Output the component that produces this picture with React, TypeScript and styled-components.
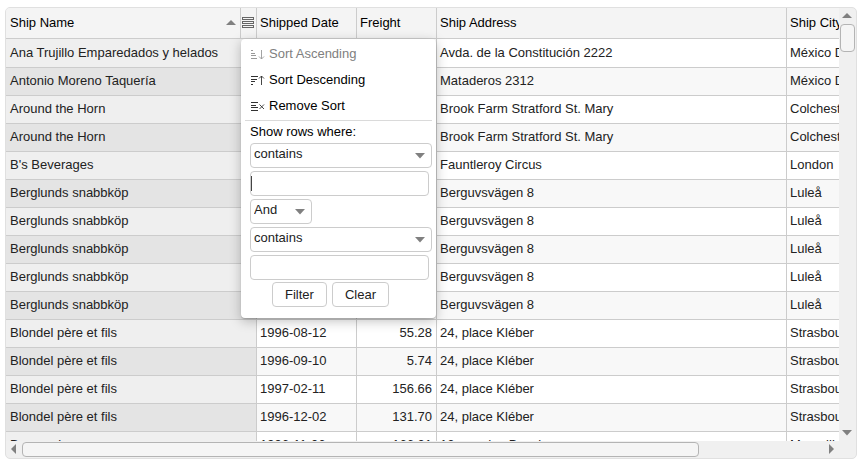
import React from "react";
import styled, { createGlobalStyle, css } from "styled-components";

const GlobalStyle = createGlobalStyle`
  *, *::before, *::after { box-sizing: border-box; }
  body {
    margin: 0;
    background: #fff;
    color: #000;
    font: 13px/16px "Liberation Sans", Arial, sans-serif;
    overflow: hidden;
  }
  button, input, select { font: inherit; color: inherit; }
`;

const line = "#ccc";

const Page = styled.main`
  height: 100vh;
  padding: 7px 5px 4px;
`;

const Grid = styled.section`
  position: relative;
  display: grid;
  grid-template-columns: minmax(0, 1fr) 17px;
  grid-template-rows: minmax(0, 1fr) 17px;
  height: 100%;
  border: 1px solid #e0e0e0;
  border-radius: 5px;
  background: #f0f0f0;
`;

const Viewport = styled.div`
  overflow: hidden;
  border-top-left-radius: 4px;
`;

const Table = styled.table`
  width: 940px;
  table-layout: fixed;
  border-collapse: separate;
  border-spacing: 0;
`;

const Col = styled.col<{ $width: number }>`
  width: ${(p) => p.$width}px;
`;

const cell = css`
  border-right: 1px solid ${line};
  border-bottom: 1px solid ${line};
  white-space: nowrap;
  overflow: hidden;
`;

const HeadCell = styled.th`
  ${cell}
  height: 31px;
  padding: 0 0 0 3px;
  background: #f4f4f4;
  font-weight: normal;
  text-align: left;
`;

const HeadContent = styled.div<{ $first?: boolean }>`
  display: flex;
  align-items: center;
  height: 30px;
  padding-left: ${(p) => (p.$first ? 1 : 0)}px;
`;

const HeadLabel = styled.span`
  flex: 1;
`;

const MenuButton = styled.button`
  display: flex;
  align-items: center;
  justify-content: center;
  width: 16px;
  height: 30px;
  margin-left: 4px;
  padding: 0 1px 0 0;
  border: 0;
  border-left: 1px solid ${line};
  background: none;
`;

const Cell = styled.td<{ $frozen?: boolean; $numeric?: boolean }>`
  ${cell}
  height: 28px;
  padding: 0 4px 1px ${(p) => (p.$frozen ? 4 : 3)}px;
  color: #222;
  text-align: ${(p) => (p.$numeric ? "right" : "left")};
  background: ${(p) => (p.$frozen ? "#efefef" : "#fff")};
  tr:nth-child(even) > & {
    background: ${(p) => (p.$frozen ? "#e4e4e4" : "#f8f8f8")};
  }
  tr:first-child > & {
    height: 29px;
    padding-bottom: 0;
  }
`;

const ScrollBar = styled.div<{ $vertical?: boolean }>`
  display: flex;
  flex-direction: ${(p) => (p.$vertical ? "column" : "row")};
`;

const ScrollButton = styled.button`
  display: flex;
  flex: none;
  align-items: center;
  justify-content: center;
  width: 16px;
  height: 16px;
  padding: 0;
  border: 0;
  background: none;
`;

const Track = styled.div<{ $vertical?: boolean }>`
  display: flex;
  flex: 1;
  flex-direction: ${(p) => (p.$vertical ? "column" : "row")};
  padding: ${(p) => (p.$vertical ? "0 1px" : "1px 0")};
`;

const Thumb = styled.div<{ $vertical?: boolean }>`
  ${(p) => (p.$vertical ? "height: 28px; width: 15px;" : "width: 84.5%; height: 15px;")}
  border: 1px solid #b4b4b4;
  border-radius: 4px;
  background: #f5f5f5;
`;

const Menu = styled.form`
  position: absolute;
  top: 31px;
  left: 235px;
  width: 195px;
  padding: 2px 4px 11px;
  border-radius: 4px;
  background: #fff;
  box-shadow: 0 3px 12px rgba(0, 0, 0, 0.25), 0 1px 1px rgba(0, 0, 0, 0.2);
`;

const MenuItem = styled.button`
  display: flex;
  align-items: center;
  gap: 4px;
  width: 100%;
  height: 26px;
  padding: 0 5px;
  border: 0;
  background: none;
  color: #000;
  &:disabled {
    color: #808080;
  }
`;

const Separator = styled.hr`
  height: 1px;
  margin: 1px 0 2px;
  border: 0;
  background: #dadada;
`;

const FilterFields = styled.fieldset`
  display: flex;
  flex-direction: column;
  align-items: flex-start;
  gap: 3px;
  margin: 0;
  padding: 0 0 0 5px;
  border: 0;
  min-width: 0;
`;

const Legend = styled.legend`
  height: 20px;
  padding: 0;
  line-height: 18px;
`;

const SelectBox = styled.div<{ $width: number }>`
  position: relative;
  width: ${(p) => p.$width}px;
  height: 25px;
  color: #222;
  svg {
    position: absolute;
    top: 10px;
    right: 7px;
    pointer-events: none;
  }
`;

const Select = styled.select`
  appearance: none;
  width: 100%;
  height: 25px;
  padding: 0 20px 3px 3px;
  border: 1px solid ${line};
  border-radius: 4px;
  background: #fff;
`;

const TextInput = styled.input`
  width: 179px;
  height: 25px;
  padding: 0;
  border: 1px solid ${line};
  border-radius: 4px;
  background: #fff;
  outline: none;
`;

const InputWrap = styled.div`
  position: relative;
  display: flex;
`;

const Caret = styled.span`
  position: absolute;
  top: 5px;
  left: 1px;
  width: 1px;
  height: 15px;
  background: #444;
`;

const Actions = styled.div`
  display: flex;
  justify-content: center;
  gap: 5px;
  padding: 2px 16px 0 0;
`;

const ActionButton = styled.button`
  height: 25px;
  padding: 0 12px;
  border: 1px solid ${line};
  border-radius: 4px;
  background: #fff;
  color: #222;
`;

type Direction = "up" | "down" | "left" | "right";

const arrows: Record<Direction, [number, number, string]> = {
  up: [10, 6, "M5 0 10 5H0Z"],
  down: [10, 6, "M0 0H10L5 5.5Z"],
  left: [6, 10, "M5 0V10L0 5Z"],
  right: [6, 10, "M1 0 6 5 1 10Z"],
};

function Arrow({ direction }: { direction: Direction }) {
  const [width, height, d] = arrows[direction];
  return (
    <svg width={width} height={height} aria-hidden="true">
      <path d={d} fill="#808080" />
    </svg>
  );
}

const sortShapes = {
  ascending: { bars: [2, 4, 5, 6], mark: "M11.5 1V10M9 7.5 11.5 10 14 7.5" },
  descending: { bars: [7, 6, 4, 2], mark: "M11.5 10V1M9 3.5 11.5 1 14 3.5" },
  remove: { bars: [7, 5, 7, 7], mark: "M9.5 3.5 14 8M14 3.5 9.5 8" },
};

function SortIcon({ kind }: { kind: keyof typeof sortShapes }) {
  const { bars, mark } = sortShapes[kind];
  return (
    <svg width="15" height="11" aria-hidden="true" opacity="0.8">
      {bars.map((width, i) => (
        <rect key={i} x="1" y={[1, 4, 6, 9][i]} width={width} height="1" fill="currentColor" />
      ))}
      <path d={mark} fill="none" stroke="currentColor" strokeWidth="0.9" />
    </svg>
  );
}

function MenuIcon() {
  return (
    <svg width="12" height="12" aria-hidden="true">
      {[0.5, 4.5, 8.5].map((y) => (
        <rect key={y} x="0.5" y={y} width="11" height="2" fill="none" stroke="#666" />
      ))}
    </svg>
  );
}

const columns = [
  { title: "Ship Name", width: 251 },
  { title: "Shipped Date", width: 100 },
  { title: "Freight", width: 80 },
  { title: "Ship Address", width: 350 },
  { title: "Ship City", width: 159 },
];

const rows = [
  ["Ana Trujillo Emparedados y helados", "", "", "Avda. de la Constitución 2222", "México D.F."],
  ["Antonio Moreno Taquería", "", "", "Mataderos 2312", "México D.F."],
  ["Around the Horn", "", "", "Brook Farm Stratford St. Mary", "Colchester"],
  ["Around the Horn", "", "", "Brook Farm Stratford St. Mary", "Colchester"],
  ["B's Beverages", "", "", "Fauntleroy Circus", "London"],
  ["Berglunds snabbköp", "", "", "Berguvsvägen 8", "Luleå"],
  ["Berglunds snabbköp", "", "", "Berguvsvägen 8", "Luleå"],
  ["Berglunds snabbköp", "", "", "Berguvsvägen 8", "Luleå"],
  ["Berglunds snabbköp", "", "", "Berguvsvägen 8", "Luleå"],
  ["Berglunds snabbköp", "", "", "Berguvsvägen 8", "Luleå"],
  ["Blondel père et fils", "1996-08-12", "55.28", "24, place Kléber", "Strasbourg"],
  ["Blondel père et fils", "1996-09-10", "5.74", "24, place Kléber", "Strasbourg"],
  ["Blondel père et fils", "1997-02-11", "156.66", "24, place Kléber", "Strasbourg"],
  ["Blondel père et fils", "1996-12-02", "131.70", "24, place Kléber", "Strasbourg"],
  ["Bon app'", "1996-11-06", "166.31", "12, rue des Bouchers", "Marseille"],
];

function OperatorSelect({ label, options, width }: { label: string; options: string[]; width: number }) {
  return (
    <SelectBox $width={width}>
      <Select aria-label={label}>
        {options.map((option) => (
          <option key={option}>{option}</option>
        ))}
      </Select>
      <Arrow direction="down" />
    </SelectBox>
  );
}

function FilterMenu() {
  return (
    <Menu onSubmit={(event) => event.preventDefault()}>
      <MenuItem type="button" disabled>
        <SortIcon kind="ascending" />
        Sort Ascending
      </MenuItem>
      <MenuItem type="button">
        <SortIcon kind="descending" />
        Sort Descending
      </MenuItem>
      <MenuItem type="button">
        <SortIcon kind="remove" />
        Remove Sort
      </MenuItem>
      <Separator />
      <FilterFields>
        <Legend>Show rows where:</Legend>
        <OperatorSelect label="First condition" options={["contains"]} width={182} />
        <InputWrap>
          <TextInput aria-label="First value" />
          <Caret />
        </InputWrap>
        <OperatorSelect label="Combine with" options={["And", "Or"]} width={62} />
        <OperatorSelect label="Second condition" options={["contains"]} width={182} />
        <TextInput aria-label="Second value" />
      </FilterFields>
      <Actions>
        <ActionButton type="submit">Filter</ActionButton>
        <ActionButton type="reset">Clear</ActionButton>
      </Actions>
    </Menu>
  );
}

export default function App() {
  return (
    <Page>
      <GlobalStyle />
      <Grid>
        <Viewport>
          <Table>
            <colgroup>
              {columns.map((column) => (
                <Col key={column.title} $width={column.width} />
              ))}
            </colgroup>
            <thead>
              <tr>
                {columns.map((column, i) => (
                  <HeadCell key={column.title} scope="col">
                    <HeadContent $first={i === 0}>
                      <HeadLabel>{column.title}</HeadLabel>
                      {i === 0 && (
                        <>
                          <Arrow direction="up" />
                          <MenuButton type="button" aria-label="Column menu">
                            <MenuIcon />
                          </MenuButton>
                        </>
                      )}
                    </HeadContent>
                  </HeadCell>
                ))}
              </tr>
            </thead>
            <tbody>
              {rows.map((row, r) => (
                <tr key={r}>
                  {row.map((value, c) => (
                    <Cell key={c} $frozen={c === 0} $numeric={c === 2}>
                      {value}
                    </Cell>
                  ))}
                </tr>
              ))}
            </tbody>
          </Table>
        </Viewport>
        <ScrollBar $vertical>
          <ScrollButton type="button" aria-label="Scroll up">
            <Arrow direction="up" />
          </ScrollButton>
          <Track $vertical>
            <Thumb $vertical />
          </Track>
          <ScrollButton type="button" aria-label="Scroll down">
            <Arrow direction="down" />
          </ScrollButton>
        </ScrollBar>
        <ScrollBar>
          <ScrollButton type="button" aria-label="Scroll left">
            <Arrow direction="left" />
          </ScrollButton>
          <Track>
            <Thumb />
          </Track>
          <ScrollButton type="button" aria-label="Scroll right">
            <Arrow direction="right" />
          </ScrollButton>
        </ScrollBar>
        <FilterMenu />
      </Grid>
    </Page>
  );
}
